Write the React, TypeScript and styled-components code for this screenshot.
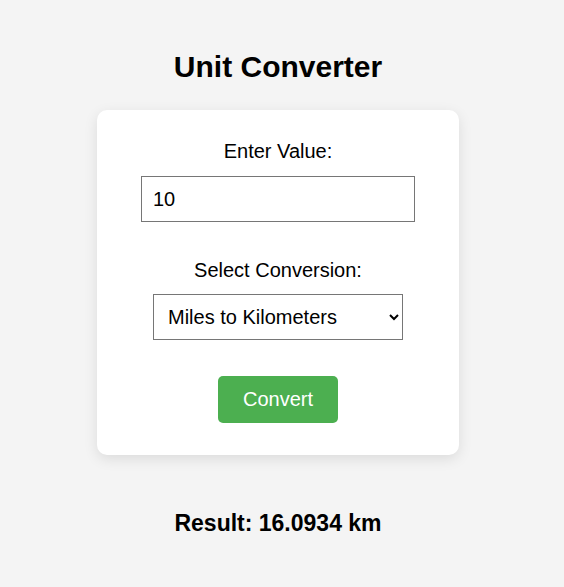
import React, { useState } from 'react'
import styled, { createGlobalStyle } from 'styled-components'

const GlobalStyle = createGlobalStyle`
  html, body {
    margin: 0;
    padding: 0;
    background: #f4f4f4;
    font-family: 'Liberation Sans', Arial, sans-serif;
    color: #000;
  }
`

const Page = styled.div`
  display: flex;
  flex-direction: column;
  align-items: center;
  padding: 49px 8px 0 0;
`

const Title = styled.h1`
  margin: 0 0 25px;
  font-size: 30px;
  line-height: 36px;
  font-weight: bold;
`

const Card = styled.div`
  box-sizing: border-box;
  width: 362px;
  background: #fff;
  border-radius: 10px;
  box-shadow: 0 4px 14px rgba(0, 0, 0, 0.1);
  padding: 30px 0 32px;
  display: flex;
  flex-direction: column;
  align-items: center;
`

const Label = styled.label<{ $space?: number }>`
  display: block;
  font-size: 20px;
  line-height: 23px;
  margin-bottom: ${({ $space }) => $space ?? 13}px;
`

const Field = styled.div<{ $gap?: number }>`
  display: flex;
  flex-direction: column;
  align-items: center;
  margin-bottom: ${({ $gap }) => $gap ?? 0}px;
`

const ValueInput = styled.input`
  box-sizing: border-box;
  width: 274px;
  height: 46px;
  padding: 0 11px;
  border: 1px solid #767676;
  border-radius: 0;
  font-family: inherit;
  font-size: 20px;
  color: #000;
  background: #fff;
  outline: none;
`

const Select = styled.select`
  box-sizing: border-box;
  width: 250px;
  height: 46px;
  padding: 0 10px;
  border: 1px solid #767676;
  border-radius: 0;
  font-family: inherit;
  font-size: 20px;
  color: #000;
  background: #fff;
`

const Button = styled.button`
  box-sizing: border-box;
  width: 120px;
  height: 47px;
  border: none;
  border-radius: 5px;
  background: #4caf50;
  color: #fff;
  font-family: inherit;
  font-size: 20px;
  cursor: pointer;
`

const Result = styled.div`
  margin-top: 55px;
  font-size: 23px;
  line-height: 26px;
  font-weight: bold;
`

const rates: Record<string, [number, string]> = {
  mi_km: [1.609344, 'km'],
  km_mi: [0.621371, 'mi'],
}

const App: React.FC = () => {
  const [value, setValue] = useState('10')
  const [mode, setMode] = useState('mi_km')
  const [result, setResult] = useState('16.0934 km')

  const convert = () => {
    const [rate, unit] = rates[mode]
    const n = parseFloat(value) * rate
    setResult(`${Number(n.toFixed(4))} ${unit}`)
  }

  return (
    <Page>
      <GlobalStyle />
      <Title>Unit Converter</Title>
      <Card>
        <Field $gap={37}>
          <Label htmlFor="val">Enter Value:</Label>
          <ValueInput id="val" value={value} onChange={e => setValue(e.target.value)} />
        </Field>
        <Field $gap={36}>
          <Label htmlFor="conv" $space={12}>Select Conversion:</Label>
          <Select id="conv" value={mode} onChange={e => setMode(e.target.value)}>
            <option value="mi_km">Miles to Kilometers</option>
            <option value="km_mi">Kilometers to Miles</option>
          </Select>
        </Field>
        <Button onClick={convert}>Convert</Button>
      </Card>
      <Result>Result: {result}</Result>
    </Page>
  )
}

export default App
